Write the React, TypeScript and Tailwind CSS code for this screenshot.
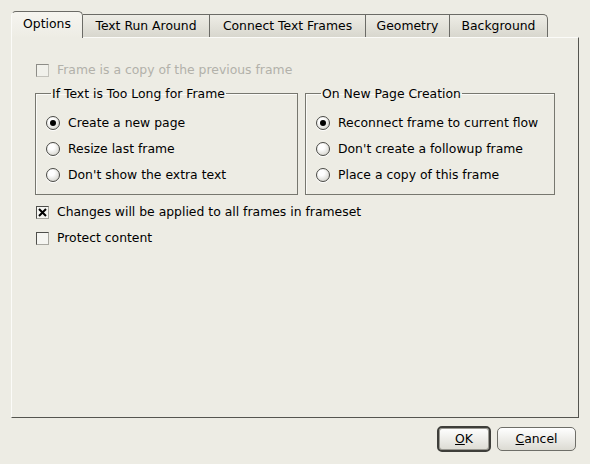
import React from "react";

const tabs = ["Options", "Text Run Around", "Connect Text Frames", "Geometry", "Background"];
const tabWidths = [72, 127, 156, 84, 98];

function Radio({ checked, label }: { checked?: boolean; label: string }) {
  return (
    <div className="flex h-[26px] items-center gap-[8px]">
      <span className="flex h-[14px] w-[14px] items-center justify-center rounded-full border border-[#4a4a46] bg-[radial-gradient(circle_at_38%_32%,#ffffff_25%,#c9c8bf_100%)] shadow-[0_1px_1px_#ffffff]">
        {checked && <span className="h-[6px] w-[6px] rounded-full bg-black" />}
      </span>
      <span>{label}</span>
    </div>
  );
}

function Check({ checked, disabled, label }: { checked?: boolean; disabled?: boolean; label: string }) {
  return (
    <div className={`flex h-[26px] items-center gap-[8px] ${disabled ? "text-[#b2b1aa]" : ""}`}>
      <span
        className={`ml-[1px] flex h-[13px] w-[13px] items-center justify-center border border-t-[#4e4e4a] border-l-[#4e4e4a] border-r-[#a8a7a0] border-b-[#a8a7a0] bg-[#f5f5f1] ${
          disabled ? "opacity-60" : ""
        }`}
      >
        {checked && (
          <svg width="9" height="9" viewBox="0 0 9 9">
            <path d="M1 1 L8 8 M8 1 L1 8" stroke="black" strokeWidth="2" />
          </svg>
        )}
      </span>
      <span>{label}</span>
    </div>
  );
}

function Group({ title, items, width }: { title: string; items: string[]; width: string }) {
  return (
    <fieldset className={`${width} h-[109px] shrink-0 border border-[#77776f] pl-[10px] pt-[9px] shadow-[inset_1px_1px_0_#fbfbf8]`}>
      <legend className="ml-[5px] px-[1px] leading-[15px]">{title}</legend>
      {items.map((t, i) => (
        <Radio key={t} label={t} checked={i === 0} />
      ))}
    </fieldset>
  );
}

export default function App() {
  return (
    <div
      className="flex h-[464px] w-[590px] flex-col bg-[#edece4] text-[12.4px] text-black"
      style={{ fontFamily: '"DejaVu Sans", sans-serif' }}
    >
      <div className="ml-[11px] mt-[11px] flex h-[26px] items-end">
        {tabs.map((t, i) => {
          const active = i === 0;
          const last = i === tabs.length - 1;
          return (
            <div
              key={t}
              className={
                active
                  ? "relative z-10 -mb-[1px] flex h-[27px] items-center justify-center rounded-t-[5px] border border-b-0 border-[#6b6b66] border-l-[#fbfbf8] bg-gradient-to-b from-[#f6f5f0] to-[#edece4] pb-[2px]"
                  : `flex h-[23px] items-center justify-center border-t border-r border-[#6b6b66] bg-gradient-to-b from-[#eeede6] to-[#d8d7ce] ${
                      last ? "rounded-tr-[5px]" : ""
                    }`
              }
              style={{ width: tabWidths[i] }}
            >
              {t}
            </div>
          );
        })}
      </div>

      <div className="ml-[11px] flex h-[381px] w-[568px] flex-col border border-t-[#fbfbf8] border-l-[#fbfbf8] border-r-[#55554f] border-b-[#55554f] pl-[23px] pt-[19px]">
        <Check disabled label="Frame is a copy of the previous frame" />
        <div className="mt-[3px] flex gap-[7px]">
          <Group
            title="If Text is Too Long for Frame"
            width="w-[263px]"
            items={["Create a new page", "Resize last frame", "Don't show the extra text"]}
          />
          <Group
            title="On New Page Creation"
            width="w-[250px]"
            items={["Reconnect frame to current flow", "Don't create a followup frame", "Place a copy of this frame"]}
          />
        </div>
        <div className="mt-[4px]">
          <Check checked label="Changes will be applied to all frames in frameset" />
          <Check label="Protect content" />
        </div>
      </div>

      <div className="mr-[14px] mt-[8px] flex justify-end gap-[6px]">
        <button className="flex h-[26px] w-[54px] items-center justify-center rounded-[5px] border-2 border-[#3e3e3a] bg-gradient-to-b from-[#ffffff] to-[#dcdbd3] shadow-[inset_0_0_0_1px_#9a9992]">
          <span>
            <span className="underline">O</span>K
          </span>
        </button>
        <button className="mt-[1px] flex h-[24px] w-[79px] items-center justify-center rounded-[5px] border border-[#6e6e68] bg-gradient-to-b from-[#ffffff] to-[#dcdbd3]">
          <span>
            <span className="underline">C</span>ancel
          </span>
        </button>
      </div>
    </div>
  );
}
